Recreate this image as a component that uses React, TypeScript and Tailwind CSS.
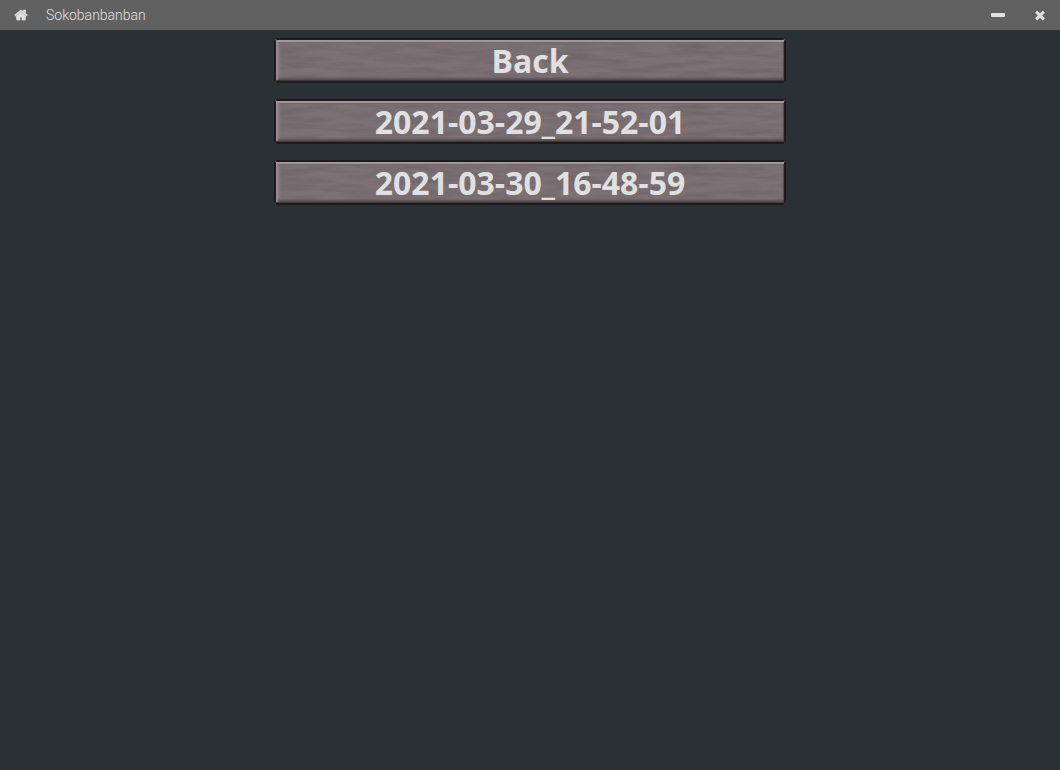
import React from "react";

const saves = ["2021-03-29_21-52-01", "2021-03-30_16-48-59"];

function HomeIcon() {
  return (
    <svg viewBox="0 0 1792 1792" className="size-3.5" fill="currentColor" stroke="currentColor" strokeWidth="80" aria-hidden="true">
      <path d="M1472 992v480q0 26-19 45t-45 19h-384v-384h-256v384h-384q-26 0-45-19t-19-45v-480q0-1 .5-3t.5-3l575-474 575 474q1 2 1 6zm223-69l-62 74q-8 9-21 11h-3q-13 0-21-7l-692-577-692 577q-12 8-24 7-13-2-21-11l-62-74q-8-10-7-23.5t11-21.5l719-599q32-26 76-26t76 26l244 204v-195q0-14 9-23t23-9h192q14 0 23 9t9 23v408l219 182q10 8 11 21.5t-7 23.5z" />
    </svg>
  );
}

function MinimizeIcon() {
  return (
    <svg viewBox="0 0 14 14" className="size-3.5" fill="currentColor" aria-hidden="true">
      <rect x="0" y="5" width="14" height="4" rx="1" />
    </svg>
  );
}

function CloseIcon() {
  return (
    <svg viewBox="0 0 1792 1792" className="size-3.5" fill="currentColor" aria-hidden="true">
      <path d="M1490 1322q0 40-28 68l-136 136q-28 28-68 28t-68-28l-294-294-294 294q-28 28-68 28t-68-28l-136-136q-28-28-28-68t28-68l294-294-294-294q-28-28-28-68t28-68l136-136q28-28 68-28t68 28l294 294 294-294q28-28 68-28t68 28l136 136q28 28 28 68t-28 68l-294 294 294 294q28 28 28 68z" />
    </svg>
  );
}

function WoodGrain({ id }: { id: string }) {
  return (
    <svg className="absolute inset-0 size-full" aria-hidden="true">
      <filter id={id} x="0" y="0" width="100%" height="100%" colorInterpolationFilters="sRGB">
        <feTurbulence type="fractalNoise" baseFrequency="0.025 0.17" numOctaves="3" seed="7" />
        <feColorMatrix values="0 0 0 0 0.33  0 0 0 0 0.3  0 0 0 0 0.31  1.6 0 0 0 -0.6" />
      </filter>
      <rect width="100%" height="100%" filter={`url(#${id})`} opacity="0.4" />
    </svg>
  );
}

function WoodButton({ label, id }: { label: string; id: string }) {
  return (
    <button
      type="button"
      className="relative h-[45px] w-full overflow-hidden rounded-[3px] border border-[#1c1a1b] bg-[#7c7175] text-center font-['Open_Sans',sans-serif] text-[32px] leading-[43px] font-bold text-[#e0e0e0]"
    >
      <WoodGrain id={id} />
      <span
        aria-hidden="true"
        className="absolute inset-0 shadow-[inset_0_0_0_1px_#211d1f,inset_0_3px_0_#a3959a,inset_0_-2px_1px_#3c3538,inset_-2px_0_1px_#514a4c,inset_3px_0_1px_#96898e,inset_0_-4px_2px_#5b5255,inset_0_4px_1px_#74696d,inset_5px_0_2px_#85797d]"
      />
      <span className="relative">{label}</span>
    </button>
  );
}

export default function App() {
  return (
    <div className="min-h-screen bg-[#2a3134]">
      <header className="flex h-[30px] items-center bg-[#616161] text-[#e0e0e0]">
        <a href="#home" aria-label="Home" className="ml-3.5">
          <HomeIcon />
        </a>
        <h1 className="ml-[18px] font-[Roboto,sans-serif] text-sm font-light">Sokobanbanban</h1>
        <div className="mr-[13px] ml-auto flex gap-7">
          <button type="button" aria-label="Minimize">
            <MinimizeIcon />
          </button>
          <button type="button" aria-label="Close">
            <CloseIcon />
          </button>
        </div>
      </header>
      <main className="mx-auto flex max-w-[512px] flex-col gap-4 pt-2">
        <WoodButton label="Back" id="grain-back" />
        {saves.map((save) => (
          <WoodButton key={save} label={save} id={`grain-${save}`} />
        ))}
      </main>
    </div>
  );
}
